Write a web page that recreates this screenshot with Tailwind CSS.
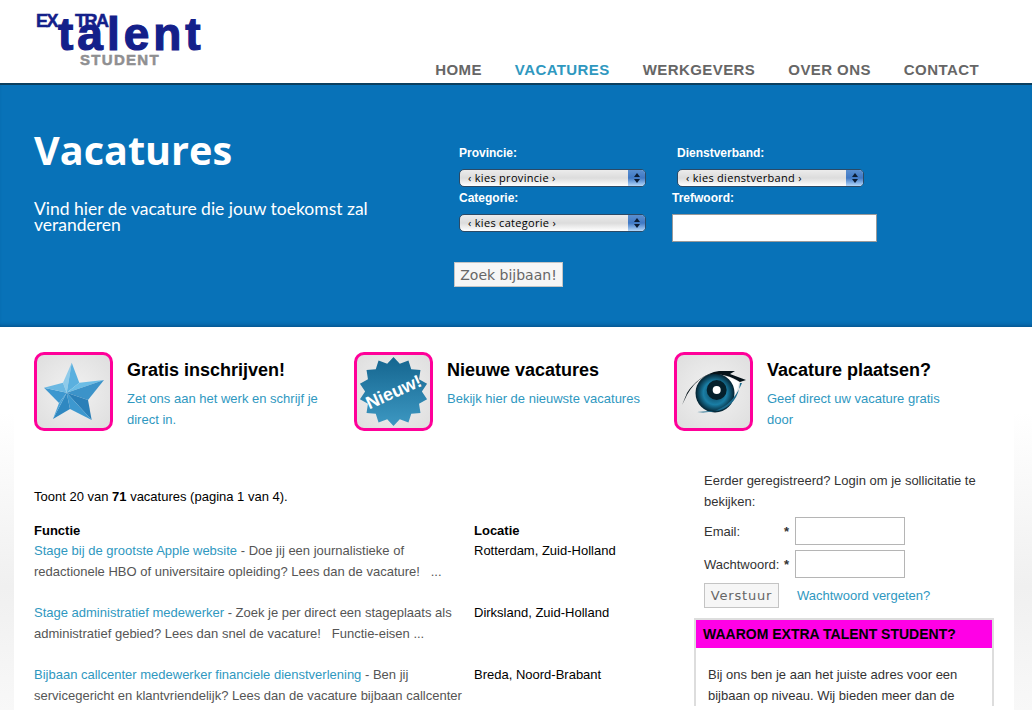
<!DOCTYPE html>
<html lang="nl">
<head>
    <meta charset="UTF-8">
    <title>Vacatures - Extra Talent Student</title>
    <script src="https://cdn.jsdelivr.net/npm/@tailwindcss/browser@4"></script>
</head>
<body class="bg-white font-['Liberation_Sans',Arial,sans-serif] text-[13px] text-[#333] h-[710px] overflow-hidden">

    <!-- header -->
    <header class="h-[85px] bg-white border-b-2 border-[#0b3f5f] flex items-end justify-between pl-[34px] pr-[53px]">
        <a href="#" class="relative block w-[175px] h-[72px] self-start font-bold">
            <span class="absolute left-[24px] top-[8px] text-[46px] leading-[52px] tracking-[4px] text-[#14208a] [-webkit-text-stroke:1.2px_#14208a]">talent</span>
            <span class="absolute left-[2px] top-[9px] text-[18px] leading-[24px] tracking-[-1.5px] text-[#14208a] [-webkit-text-stroke:0.5px_#14208a]">EX</span>
            <span class="absolute left-[41px] top-[9px] text-[18px] leading-[24px] tracking-[-1.5px] text-[#14208a] [-webkit-text-stroke:0.5px_#14208a]">TRA</span>
            <span class="absolute left-[46px] top-[52px] text-[15px] leading-[16px] tracking-[1.3px] text-[#8f8f91] [-webkit-text-stroke:0.5px_#8f8f91]">STUDENT</span>
        </a>
        <nav class="flex gap-[33px] pb-[3px] text-[15px] leading-[20px] font-bold tracking-[0.42px] text-[#666]">
            <a href="#">HOME</a>
            <a href="#" class="text-[#2f98bf]">VACATURES</a>
            <a href="#">WERKGEVERS</a>
            <a href="#">OVER ONS</a>
            <a href="#">CONTACT</a>
        </nav>
    </header>

    <!-- hero -->
    <section class="h-[242px] bg-[#0872b8] shadow-[inset_0_-4px_4px_-3px_rgba(0,40,80,0.5)] flex text-white">
        <div class="w-[454px] pl-[34px] pt-[40px]">
            <h1 class="font-['Open_Sans',sans-serif] font-bold text-[39.6px] leading-[50px]">Vacatures</h1>
            <p class="mt-[26px] w-[350px] font-['Lato',sans-serif] text-[17.5px] leading-[16px]">Vind hier de vacature die jouw toekomst zal veranderen</p>
        </div>
        <form class="pt-[60px] w-[450px] text-[12px] font-bold leading-[16px]">
            <div class="flex pl-[5px]">
                <div class="w-[218px]">
                    <label class="block">Provincie:</label>
                    <div class="relative mt-[8px] w-[187px] h-[18px] rounded-[5px] border border-[#2b4a66] bg-gradient-to-b from-[#ececec] via-[#dcdcdc] to-white overflow-hidden">
                        <span class="block pl-[8px] text-[11px] leading-[16px] font-normal tracking-[0.3px] text-black font-['Open_Sans',sans-serif]">‹ kies provincie ›</span>
                        <span class="absolute right-0 top-0 h-full w-[17px] bg-gradient-to-b from-[#5a8fd0] via-[#3f78c4] to-[#b5d8fa] flex flex-col items-center justify-center gap-[2px]">
                            <i class="w-0 h-0 border-x-[3px] border-x-transparent border-b-[4px] border-b-[#0b1c33]"></i>
                            <i class="w-0 h-0 border-x-[3px] border-x-transparent border-t-[4px] border-t-[#0b1c33]"></i>
                        </span>
                    </div>
                </div>
                <div>
                    <label class="block">Dienstverband:</label>
                    <div class="relative mt-[8px] w-[187px] h-[18px] rounded-[5px] border border-[#2b4a66] bg-gradient-to-b from-[#ececec] via-[#dcdcdc] to-white overflow-hidden">
                        <span class="block pl-[8px] text-[11px] leading-[16px] font-normal tracking-[0.3px] text-black font-['Open_Sans',sans-serif]">‹ kies dienstverband ›</span>
                        <span class="absolute right-0 top-0 h-full w-[17px] bg-gradient-to-b from-[#5a8fd0] via-[#3f78c4] to-[#b5d8fa] flex flex-col items-center justify-center gap-[2px]">
                            <i class="w-0 h-0 border-x-[3px] border-x-transparent border-b-[4px] border-b-[#0b1c33]"></i>
                            <i class="w-0 h-0 border-x-[3px] border-x-transparent border-t-[4px] border-t-[#0b1c33]"></i>
                        </span>
                    </div>
                </div>
            </div>
            <div class="flex pl-[5px] mt-[3px]">
                <div class="w-[213px]">
                    <label class="block">Categorie:</label>
                    <div class="relative mt-[8px] w-[187px] h-[18px] rounded-[5px] border border-[#2b4a66] bg-gradient-to-b from-[#ececec] via-[#dcdcdc] to-white overflow-hidden">
                        <span class="block pl-[8px] text-[11px] leading-[16px] font-normal tracking-[0.3px] text-black font-['Open_Sans',sans-serif]">‹ kies categorie ›</span>
                        <span class="absolute right-0 top-0 h-full w-[17px] bg-gradient-to-b from-[#5a8fd0] via-[#3f78c4] to-[#b5d8fa] flex flex-col items-center justify-center gap-[2px]">
                            <i class="w-0 h-0 border-x-[3px] border-x-transparent border-b-[4px] border-b-[#0b1c33]"></i>
                            <i class="w-0 h-0 border-x-[3px] border-x-transparent border-t-[4px] border-t-[#0b1c33]"></i>
                        </span>
                    </div>
                </div>
                <div>
                    <label class="block">Trefwoord:</label>
                    <input type="text" class="block mt-[8px] w-[205px] h-[28px] bg-white border border-[#9a9a9a]">
                </div>
            </div>
            <button type="button" class="block mt-[20px] w-[109px] h-[25px] bg-[#f6f6f6] border border-[#c4c4c4] text-[#666] font-normal text-[14px] leading-[22px] whitespace-nowrap font-['DejaVu_Sans',sans-serif]">Zoek bijbaan!</button>
        </form>
    </section>

    <!-- page body -->
    <div class="bg-[linear-gradient(to_bottom,#fff_85px,#f0f0f0_260px,#f8f8f8_383px)] h-[383px]">
        <div class="ml-[14px] mr-[18px] bg-white h-full">
            <!-- features -->
            <div class="flex pt-[25px] pl-[20px]">
                <div class="w-[320px] flex">
                    <div class="w-[79px] h-[79px] shrink-0 rounded-[10px] border-[3px] border-[#ff0099] bg-[radial-gradient(circle,#f2f2f2,#dedede)]">
                        <svg viewBox="0 0 73 73" class="w-[73px] h-[73px]">
                            <path d="M34.7 7.7 L26 27.7 L29.7 37.7 Z" fill="#8fcbea"/>
                            <path d="M34.7 7.7 L42.3 27.7 L29.7 37.7 Z" fill="#5ab0df"/>
                            <path d="M67 25 L42.3 27.7 L29.7 37.7 Z" fill="#6bbde6"/>
                            <path d="M67 25 L51 45 L29.7 37.7 Z" fill="#3c93c9"/>
                            <path d="M54.7 65 L51 45 L29.7 37.7 Z" fill="#2a7fb8"/>
                            <path d="M54.7 65 L33 54 L29.7 37.7 Z" fill="#3d98cf"/>
                            <path d="M16 64 L33 54 L29.7 37.7 Z" fill="#2f88c1"/>
                            <path d="M16 64 L22 48 L29.7 37.7 Z" fill="#4ba2d6"/>
                            <path d="M7 32.7 L22 48 L29.7 37.7 Z" fill="#3d97cf"/>
                            <path d="M7 32.7 L26 27.7 L29.7 37.7 Z" fill="#6bb8e2"/>
                        </svg>
                    </div>
                    <div class="ml-[14px] w-[200px]">
                        <h3 class="mt-[5px] text-[18px] leading-[26px] font-bold text-black">Gratis inschrijven!</h3>
                        <p class="mt-[5px] leading-[21px] text-[#2f98bf]">Zet ons aan het werk en schrijf je direct in.</p>
                    </div>
                </div>
                <div class="w-[320px] flex">
                    <div class="w-[79px] h-[79px] shrink-0 rounded-[10px] border-[3px] border-[#ff0099] bg-[radial-gradient(circle,#f2f2f2,#dedede)] relative">
                        <svg viewBox="0 0 72 72" class="w-[73px] h-[73px]">
                            <defs>
                                <linearGradient id="badge" x1="0" y1="0" x2="0" y2="1">
                                    <stop offset="0" stop-color="#14658f"/>
                                    <stop offset="1" stop-color="#3d98c2"/>
                                </linearGradient>
                            </defs>
                            <path d="M36 2 L42.2 8.7 L50.75 5.4 L53.5 14.1 L62.6 14.8 L61.2 23.9 L69.1 28.4 L64 36 L69.1 43.6 L61.2 48.1 L62.6 57.2 L53.5 57.9 L50.75 66.6 L42.2 63.3 L36 70 L29.8 63.3 L21.25 66.6 L18.5 57.9 L9.4 57.2 L10.8 48.1 L2.9 43.6 L8 36 L2.9 28.4 L10.8 23.9 L9.4 14.8 L18.5 14.1 L21.25 5.4 L29.8 8.7 Z" fill="url(#badge)"/>
                        </svg>
                        <span class="absolute inset-0 flex items-center justify-center text-[18px] leading-[22px] font-bold text-white -rotate-[24deg]">Nieuw!</span>
                    </div>
                    <div class="ml-[14px] w-[200px]">
                        <h3 class="mt-[5px] text-[18px] leading-[26px] font-bold text-black">Nieuwe vacatures</h3>
                        <p class="mt-[5px] leading-[21px] text-[#2f98bf]">Bekijk hier de nieuwste vacatures</p>
                    </div>
                </div>
                <div class="w-[320px] flex">
                    <div class="w-[79px] h-[79px] shrink-0 rounded-[10px] border-[3px] border-[#ff0099] bg-[radial-gradient(circle,#f2f2f2,#dedede)]">
                        <svg viewBox="0 0 73 73" class="w-[73px] h-[73px]">
                            <defs>
                                <radialGradient id="iris" cx="0.5" cy="0.5" r="0.5">
                                    <stop offset="0" stop-color="#0b3d55"/>
                                    <stop offset="0.6" stop-color="#1a7ea5"/>
                                    <stop offset="1" stop-color="#03202e"/>
                                </radialGradient>
                            </defs>
                            <path d="M20 40 C26 26 40 20 52 22 L62 27 C60 40 52 54 38 57 Z" fill="#fff"/>
                            <circle cx="38" cy="38" r="19.5" fill="url(#iris)"/>
                            <circle cx="39.7" cy="35" r="10" fill="#04202c"/>
                            <circle cx="39.7" cy="35" r="4" fill="#fff"/>
                            <path d="M5 50 L10 38 C16 28 28 18 42 16 L58 16 L53 19 L69 25 L63 27 C54 21 44 19 36 19 C24 20 14 32 9 42 Z" fill="#06131a"/>
                            <path d="M63 28 C62 42 54 52 42 55.5 L20 57 C36 59 54 54 65 28 Z" fill="#1b6a8c"/>
                        </svg>
                    </div>
                    <div class="ml-[14px] w-[200px]">
                        <h3 class="mt-[5px] text-[18px] leading-[26px] font-bold text-black">Vacature plaatsen?</h3>
                        <p class="mt-[5px] leading-[21px] text-[#2f98bf]">Geef direct uw vacature gratis door</p>
                    </div>
                </div>
            </div>

            <div class="flex pl-[20px] mt-[40px]">
                <!-- results -->
                <div class="w-[660px] pt-[17px]">
                    <p class="leading-[18px] text-black">Toont 20 van <b>71</b> vacatures (pagina 1 van 4).</p>
                    <table class="mt-[16px] w-[600px] border-collapse text-[#555] leading-[21px]">
                        <thead>
                            <tr class="text-black text-left leading-[18px]">
                                <th class="w-[440px] font-bold">Functie</th>
                                <th class="font-bold">Locatie</th>
                            </tr>
                        </thead>
                        <tbody class="align-top">
                            <tr>
                                <td class="pb-[20px] pr-[10px]"><a href="#" class="text-[#2f98bf]">Stage bij de grootste Apple website</a> - Doe jij een journalistieke of redactionele HBO of universitaire opleiding? Lees dan de vacature! &nbsp; ...</td>
                                <td class="text-black">Rotterdam, Zuid-Holland</td>
                            </tr>
                            <tr>
                                <td class="pb-[20px] pr-[10px]"><a href="#" class="text-[#2f98bf]">Stage administratief medewerker</a> - Zoek je per direct een stageplaats als administratief gebied? Lees dan snel de vacature! &nbsp; Functie-eisen ...</td>
                                <td class="text-black">Dirksland, Zuid-Holland</td>
                            </tr>
                            <tr>
                                <td class="pr-[10px]"><a href="#" class="text-[#2f98bf]">Bijbaan callcenter medewerker financiele dienstverlening</a> - Ben jij servicegericht en klantvriendelijk? Lees dan de vacature bijbaan callcenter</td>
                                <td class="text-black">Breda, Noord-Brabant</td>
                            </tr>
                        </tbody>
                    </table>
                </div>

                <!-- sidebar -->
                <aside class="w-[300px]">
                    <div class="pl-[10px] leading-[21px] w-[290px]">
                        <p class="-mt-[1px]">Eerder geregistreerd? Login om je sollicitatie te bekijken:</p>
                        <div class="mt-[5px] flex items-center h-[28px]">
                            <label class="w-[80px]">Email:</label>
                            <span class="w-[11px] font-bold">*</span>
                            <input type="text" class="w-[110px] h-[28px] bg-white border border-[#b5b5b5]">
                        </div>
                        <div class="mt-[5px] flex items-center h-[28px]">
                            <label class="w-[80px]">Wachtwoord:</label>
                            <span class="w-[11px] font-bold">*</span>
                            <input type="text" class="w-[110px] h-[28px] bg-white border border-[#b5b5b5]">
                        </div>
                        <div class="mt-[5px] flex items-center">
                            <button type="button" class="w-[75px] h-[25px] bg-[#f6f6f6] border border-[#c4c4c4] text-[#666] text-[13px] tracking-[0.8px] font-['DejaVu_Sans',sans-serif]">Verstuur</button>
                            <a href="#" class="ml-[18px] text-[#2f98bf]">Wachtwoord vergeten?</a>
                        </div>
                    </div>
                    <div class="mt-[10px] border-2 border-b-0 border-[#dddddd] bg-white">
                        <h4 class="h-[28px] bg-[#ff00e6] pl-[7px] text-[14px] leading-[28px] font-bold text-black">WAAROM EXTRA TALENT STUDENT?</h4>
                        <p class="px-[12px] pt-[16px] leading-[21px]">Bij ons ben je aan het juiste adres voor een bijbaan op niveau. Wij bieden meer dan de</p>
                    </div>
                </aside>
            </div>
        </div>
    </div>
</body>
</html>
